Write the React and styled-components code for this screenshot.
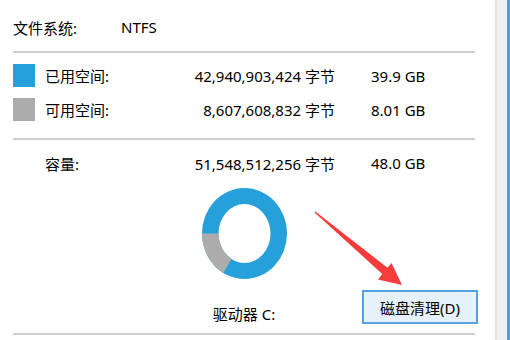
import React from 'react';
import styled, { createGlobalStyle } from 'styled-components';

const GlobalStyle = createGlobalStyle`
  html, body {
    margin: 0;
    padding: 0;
    background: #fff;
  }
  body {
    font-family: "Noto Sans", "Noto Sans CJK SC", sans-serif;
    font-size: 15px;
    color: #000;
  }
`;

const usage = [
  { label: '已用空间:', bytes: '42,940,903,424 字节', size: '39.9 GB', color: '#26a0da' },
  { label: '可用空间:', bytes: '8,607,608,832 字节', size: '8.01 GB', color: '#acacac' },
];

const Page = styled.div`
  position: relative;
  display: flex;
  width: 510px;
  height: 340px;
  overflow: hidden;
`;

const Panel = styled.div`
  width: 495px;
  box-sizing: border-box;
  padding: 0 20px 0 13px;
  display: flex;
  flex-direction: column;
  background: #fff;
`;

const Side = styled.div`
  flex: 1;
  background: #f0f0f0;
  border-left: 2px solid #e2e2e2;
  border-right: 3px solid #5b9bd5;
`;

const InfoRow = styled.div`
  height: 51px;
  box-sizing: border-box;
  padding-top: 3px;
  display: flex;
  align-items: center;
`;

const InfoLabel = styled.span`
  width: 108px;
`;

const Divider = styled.div`
  height: 2px;
  background: #d0d0d0;
  margin-top: ${({ $top }) => $top || 0}px;
`;

const Rows = styled.div`
  margin-top: ${({ $top }) => $top}px;
  display: flex;
  flex-direction: column;
`;

const Row = styled.div`
  height: 34px;
  display: grid;
  grid-template-columns: 22px 130px 170px auto;
  align-items: center;
`;

const Swatch = styled.span`
  width: 22px;
  height: 23px;
  background: ${({ $color }) => $color || 'transparent'};
`;

const Label = styled.span`
  padding-left: 10px;
`;

const Bytes = styled.span`
  text-align: right;
  white-space: nowrap;
`;

const Size = styled.span`
  padding-left: 36px;
  white-space: nowrap;
`;

const Bottom = styled.div`
  margin-top: 8px;
  display: grid;
  grid-template-columns: 1fr auto 1fr;
`;

const Chart = styled.div`
  grid-column: 2;
  display: flex;
  flex-direction: column;
  align-items: center;
`;

const DriveLabel = styled.div`
  margin-top: 25px;
  line-height: 20px;
`;

const ButtonCell = styled.div`
  grid-column: 3;
  display: flex;
  justify-content: flex-end;
  align-items: flex-end;
  margin-right: -3px;
`;

const CleanButton = styled.button`
  width: 116px;
  height: 34px;
  box-sizing: border-box;
  border: 2px solid #5aa2df;
  background: #e5f1fb;
  font-family: "Noto Sans", "Noto Sans CJK SC", sans-serif;
  font-size: 15px;
  color: #000;
  padding: 0;
`;

const Overlay = styled.svg`
  position: absolute;
  left: 0;
  top: 0;
  pointer-events: none;
`;

const Donut = () => (
  <svg width="85" height="91" viewBox="0 0 85 91">
    <path
      fillRule="evenodd"
      fill="#26a0da"
      d="M42.5 0 A42.5 45.5 0 1 1 42.5 91 A42.5 45.5 0 1 1 42.5 0 Z M42.5 16 A26 29.5 0 1 0 42.5 75 A26 29.5 0 1 0 42.5 16 Z"
    />
    <path
      fill="#acacac"
      d="M0 45.5 A42.5 45.5 0 0 0 21.25 84.9 L29.5 71.05 A26 29.5 0 0 1 16.5 45.5 Z"
    />
  </svg>
);

export default function App() {
  return (
    <>
      <GlobalStyle />
      <Page>
        <Panel>
          <InfoRow>
            <InfoLabel>文件系统:</InfoLabel>
            <span>NTFS</span>
          </InfoRow>
          <Divider />
          <Rows $top={5.5}>
            {usage.map((u) => (
              <Row key={u.label}>
                <Swatch $color={u.color} />
                <Label>{u.label}</Label>
                <Bytes>{u.bytes}</Bytes>
                <Size>{u.size}</Size>
              </Row>
            ))}
          </Rows>
          <Divider $top={11.5} />
          <Rows $top={6}>
            <Row>
              <Swatch />
              <Label>容量:</Label>
              <Bytes>51,548,512,256 字节</Bytes>
              <Size>48.0 GB</Size>
            </Row>
          </Rows>
          <Bottom>
            <Chart>
              <Donut />
              <DriveLabel>驱动器 C:</DriveLabel>
            </Chart>
            <ButtonCell>
              <CleanButton>磁盘清理(D)</CleanButton>
            </ButtonCell>
          </Bottom>
          <Divider $top={9} />
        </Panel>
        <Side />
        <Overlay width="510" height="340" viewBox="0 0 510 340">
          <polygon
            fill="#f53c3c"
            points="315.4,211.4 387.5,267.8 391.5,263 402,285 378,279.5 382.3,273.9 314.6,212.6"
          />
        </Overlay>
      </Page>
    </>
  );
}
